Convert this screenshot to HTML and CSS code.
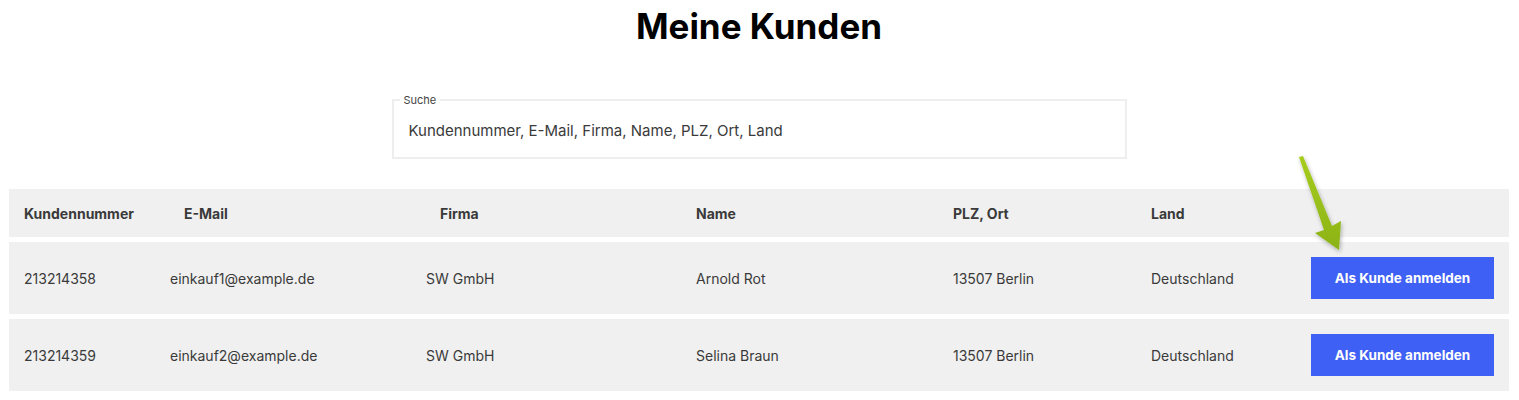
FILE: index.html
```html
<!DOCTYPE html>
<html lang="de">
<head>
    <meta charset="UTF-8">
    <meta name="viewport" content="width=device-width, initial-scale=1.0">
    <title>Meine Kunden</title>
    <link rel="stylesheet" href="styles.css">
</head>
<body>
    <main class="page">
        <h1 class="title">Meine Kunden</h1>

        <form class="search">
            <fieldset class="search-box">
                <legend>Suche</legend>
                <input type="text" class="search-input" placeholder="Kundennummer, E-Mail, Firma, Name, PLZ, Ort, Land">
            </fieldset>
        </form>

        <div class="customers">
            <div class="row head">
                <div>Kundennummer</div>
                <div>E-Mail</div>
                <div>Firma</div>
                <div>Name</div>
                <div>PLZ, Ort</div>
                <div>Land</div>
                <div></div>
            </div>
            <div class="row">
                <div>213214358</div>
                <div>einkauf1@example.de</div>
                <div>SW GmbH</div>
                <div>Arnold Rot</div>
                <div>13507 Berlin</div>
                <div>Deutschland</div>
                <div><button class="login-btn">Als Kunde anmelden</button></div>
            </div>
            <div class="row">
                <div>213214359</div>
                <div>einkauf2@example.de</div>
                <div>SW GmbH</div>
                <div>Selina Braun</div>
                <div>13507 Berlin</div>
                <div>Deutschland</div>
                <div><button class="login-btn">Als Kunde anmelden</button></div>
            </div>
        </div>
    </main>

    <!-- hint arrow over the first button -->
    <svg class="hint-arrow" width="1519" height="400" viewBox="0 0 1519 400">
        <defs>
            <linearGradient id="arrow-fill" x1="0" y1="0" x2="0" y2="1">
                <stop offset="0" stop-color="#a6cc1e"/>
                <stop offset="1" stop-color="#8cb317"/>
            </linearGradient>
            <filter id="arrow-shadow" x="-50%" y="-20%" width="200%" height="150%">
                <feDropShadow dx="1" dy="2" stdDeviation="2" flood-color="#000" flood-opacity="0.3"/>
            </filter>
        </defs>
        <polygon points="1299,157 1303,156 1332,226 1341,221 1339,250 1315,233 1324,230" fill="url(#arrow-fill)" filter="url(#arrow-shadow)"/>
    </svg>
</body>
</html>
```

FILE: styles.css
```css
/* Basic page styles */
body {
    font-family: Inter, "Liberation Sans", sans-serif;
    color: #3a3a3a;
    background-color: #fff;
    margin: 0;
    padding: 0;
}
.page {
    padding: 0 10px 0 9px;
}
.title {
    margin: 0;
    padding-top: 5px;
    text-align: center;
    font-size: 35px;
    font-weight: 700;
    color: #000;
    line-height: 42px;
}

/* Search field */
.search {
    display: flex;
    justify-content: center;
    margin-top: 46px;
}
.search-box {
    width: 735px;
    box-sizing: border-box;
    margin: 0;
    padding: 0 14px 0 15px;
    border: 2px solid #eeeeee;
    height: 66px;
}
.search-box legend {
    font-size: 11px;
    color: #444;
    padding: 0 4px;
    margin-left: -9px;
}
.search-input {
    width: 100%;
    border: none;
    outline: none;
    font-family: inherit;
    font-size: 15px;
    padding: 14px 0 0 0;
    background: transparent;
}
.search-input::placeholder {
    color: #3a3a3a;
}

/* Customer table */
.customers {
    margin-top: 30px;
    display: flex;
    flex-direction: column;
    gap: 5px;
}
.row {
    display: grid;
    grid-template-columns: 146px 256px 270px 257px 198px 160px 1fr;
    align-items: center;
    background-color: #f0f0f0;
    height: 72px;
    font-size: 14px;
    padding-left: 15px;
}
.row.head {
    grid-template-columns: 160px 256px 256px 257px 198px 160px 1fr;
    height: 48px;
    font-weight: 700;
}
.login-btn {
    width: 183px;
    height: 42px;
    border: none;
    background-color: #3f60f4;
    color: #fff;
    font-family: inherit;
    font-size: 13.5px;
    font-weight: 700;
    cursor: pointer;
}

.hint-arrow {
    position: absolute;
    top: 0;
    left: 0;
    pointer-events: none;
}
```
